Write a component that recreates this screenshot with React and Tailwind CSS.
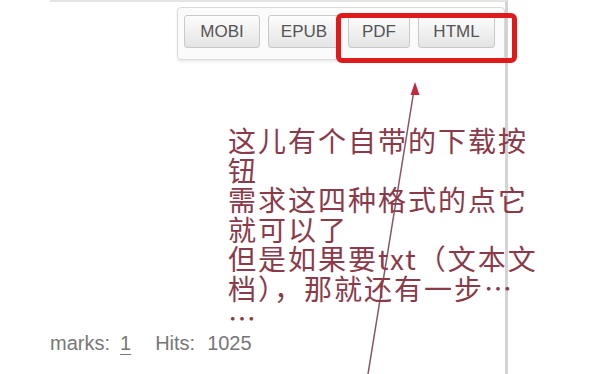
const formats = [
  { label: "MOBI", w: "w-[76px]" },
  { label: "EPUB", w: "w-[72px]" },
  { label: "PDF", w: "w-[62px]" },
  { label: "HTML", w: "w-[77px]" },
]

const noteLines = [
  "这儿有个自带的下载按",
  "钮",
  "需求这四种格式的点它",
  "就可以了",
  "但是如果要txt（文本文",
  "档），那就还有一步…",
  "…",
]

export default function App() {
  return (
    <div className="relative h-[374px] w-[600px] overflow-hidden bg-white font-['Liberation_Sans',sans-serif]">
      <div className="ml-[50px] flex h-full w-[458px] flex-col border-r-[3px] border-t-2 border-r-[#d4d4d4] border-t-[#e4e4e4]">
        <div className="mr-[0px] mt-[5px] flex justify-end">
          <div className="flex h-[53px] gap-[8px] rounded-[4px] border border-[#dadada] bg-[#fbfbfb] pl-[6px] pr-[9px] pt-[7px] shadow-[0_2px_3px_rgba(0,0,0,0.08)]">
            {formats.map((f) => (
              <button
                key={f.label}
                className={`${f.w} flex h-[33px] items-center justify-center rounded-[3px] border border-[#c9c9c9] bg-gradient-to-b from-[#fdfdfd] to-[#e4e4e4] text-[17px] text-[#555]`}
              >
                {f.label}
              </button>
            ))}
          </div>
        </div>

        <div className="flex-1" />

        <div className="flex items-baseline pb-[19px] text-[20px] leading-[23px] text-[#777]">
          <span>marks:</span>
          <span className="ml-[10px] underline decoration-1 underline-offset-[4px]">1</span>
          <span className="ml-[24px]">Hits:</span>
          <span className="ml-[12px]">1025</span>
        </div>
      </div>

      {/* red highlight round PDF / HTML */}
      <div className="absolute left-[336px] top-[13px] h-[50px] w-[181px] rounded-[6px] border-[5px] border-[#e01a1a]" />

      {/* annotation arrow */}
      <svg className="absolute left-0 top-0" width="600" height="374" viewBox="0 0 600 374">
        <line x1="368" y1="374" x2="414" y2="90" stroke="#8a5563" strokeWidth="1.5" />
        <path d="M415 82 L419.5 95 L410.5 95 Z" fill="#c4283c" />
      </svg>

      {/* annotation note */}
      <div className="absolute left-[228px] top-[126px] font-['Noto_Sans_CJK_SC',sans-serif] text-[28px] leading-[29.6px] tracking-[2px] whitespace-nowrap text-[#8b3a4a]">
        {noteLines.map((line, i) => (
          <div key={i}>{line}</div>
        ))}
      </div>
    </div>
  )
}
